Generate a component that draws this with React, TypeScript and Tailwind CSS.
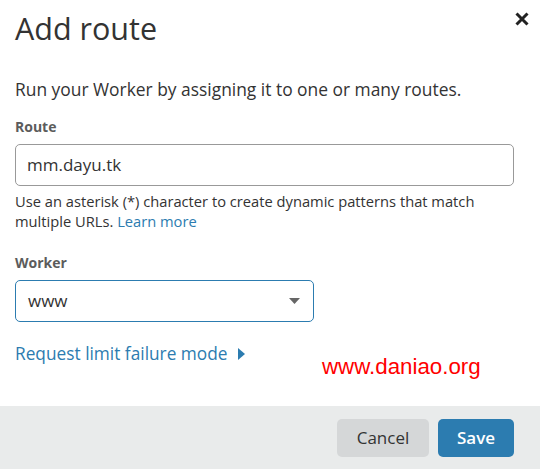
import React from "react";

export default function App() {
  const font = { fontFamily: '"Open Sans", "Noto Sans", sans-serif' };
  return (
    <div className="relative flex h-[469px] w-[540px] flex-col bg-white text-[#333]" style={font}>
      <div className="flex-1 px-[15px]">
        <div className="flex items-start justify-between pt-[6px]">
          <h1 className="text-[30.5px] leading-[44px] font-normal text-[#333]">Add route</h1>
          <svg className="mt-[6px] mr-[-4px]" width="14" height="14" viewBox="0 0 14 14">
            <path d="M1.5 1.5 L12.5 12.5 M12.5 1.5 L1.5 12.5" stroke="#222" strokeWidth="3" strokeLinecap="butt" />
          </svg>
        </div>
        <p className="mt-[28px] text-[17.4px] leading-[22px] text-[#333]">
          Run your Worker by assigning it to one or many routes.
        </p>
        <div className="mt-[18px] text-[14px] font-bold leading-[18px] text-[#5c5c5c]">Route</div>
        <div className="mt-[8px] flex h-[42px] w-[499px] items-center rounded-[5px] border border-[#999] px-[11px] text-[17px] text-[#333]">
          mm.dayu.tk
        </div>
        <p className="mt-[5px] text-[14.7px] leading-[20px] text-[#333]">
          Use an asterisk (*) character to create dynamic patterns that match
          <br />
          multiple URLs. <span className="text-[#2c7cb0]">Learn more</span>
        </p>
        <div className="mt-[23px] text-[14px] font-bold leading-[18px] text-[#5c5c5c]">Worker</div>
        <div className="mt-[8px] flex h-[42px] w-[299px] items-center justify-between rounded-[5px] border border-[#2c7cb0] pl-[12px] pr-[13px] text-[17px] text-[#333]">
          <span>www</span>
          <svg width="11" height="6" viewBox="0 0 11 6">
            <path d="M0 0 H11 L5.5 6 Z" fill="#666" />
          </svg>
        </div>
        <div className="mt-[21px] flex items-center text-[17.3px] leading-[22px] text-[#2c7cb0]">
          <span>Request limit failure mode</span>
          <svg className="ml-[10px]" width="7" height="12" viewBox="0 0 7 12">
            <path d="M0 0 L7 6 L0 12 Z" fill="#2c7cb0" />
          </svg>
        </div>
      </div>
      <div className="absolute left-[322px] top-[353px] text-[22.3px] leading-[28px] text-[#ff0000]" style={{ fontFamily: '"Liberation Sans", Arial, sans-serif' }}>
        www.daniao.org
      </div>
      <div className="flex h-[63px] items-center justify-end gap-[9px] bg-[#e9ebeb] pr-[26px]">
        <button className="h-[38px] w-[92px] rounded-[5px] bg-[#d5d7d8] text-[17px] text-[#333]">Cancel</button>
        <button className="h-[38px] w-[76px] rounded-[5px] bg-[#2c7cb0] text-[17px] font-semibold text-white">Save</button>
      </div>
    </div>
  );
}
